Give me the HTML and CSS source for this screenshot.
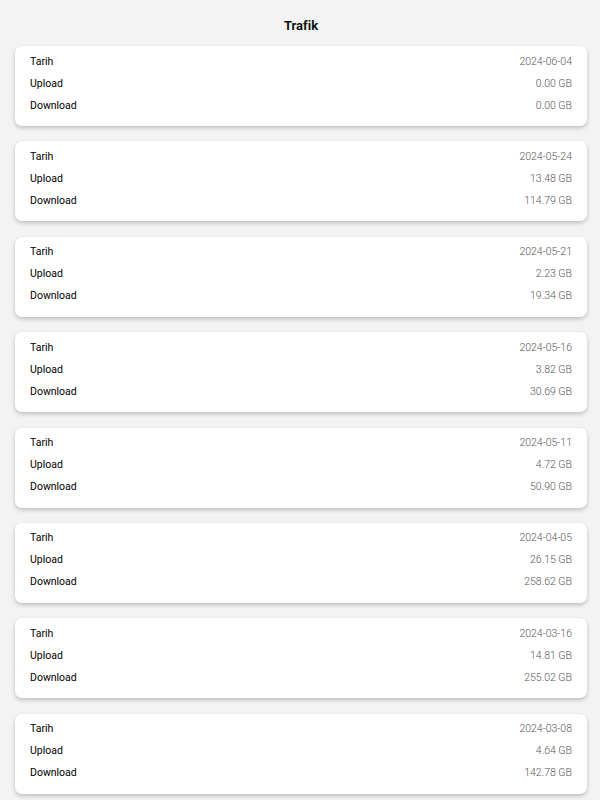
FILE: index.html
```html
<!DOCTYPE html>
<html lang="tr">
<head>
<meta charset="utf-8" />
<title>Trafik</title>
<link rel="stylesheet" href="styles.css">
</head>
<body>
<div class="page">
  <h1 class="title">Trafik</h1>
  <div class="list">
    <div class="card">
      <div class="row"><span class="label">Tarih</span><span class="value">2024-06-04</span></div>
      <div class="row"><span class="label">Upload</span><span class="value">0.00 GB</span></div>
      <div class="row"><span class="label">Download</span><span class="value">0.00 GB</span></div>
    </div>
    <div class="card">
      <div class="row"><span class="label">Tarih</span><span class="value">2024-05-24</span></div>
      <div class="row"><span class="label">Upload</span><span class="value">13.48 GB</span></div>
      <div class="row"><span class="label">Download</span><span class="value">114.79 GB</span></div>
    </div>
    <div class="card">
      <div class="row"><span class="label">Tarih</span><span class="value">2024-05-21</span></div>
      <div class="row"><span class="label">Upload</span><span class="value">2.23 GB</span></div>
      <div class="row"><span class="label">Download</span><span class="value">19.34 GB</span></div>
    </div>
    <div class="card">
      <div class="row"><span class="label">Tarih</span><span class="value">2024-05-16</span></div>
      <div class="row"><span class="label">Upload</span><span class="value">3.82 GB</span></div>
      <div class="row"><span class="label">Download</span><span class="value">30.69 GB</span></div>
    </div>
    <div class="card">
      <div class="row"><span class="label">Tarih</span><span class="value">2024-05-11</span></div>
      <div class="row"><span class="label">Upload</span><span class="value">4.72 GB</span></div>
      <div class="row"><span class="label">Download</span><span class="value">50.90 GB</span></div>
    </div>
    <div class="card">
      <div class="row"><span class="label">Tarih</span><span class="value">2024-04-05</span></div>
      <div class="row"><span class="label">Upload</span><span class="value">26.15 GB</span></div>
      <div class="row"><span class="label">Download</span><span class="value">258.62 GB</span></div>
    </div>
    <div class="card">
      <div class="row"><span class="label">Tarih</span><span class="value">2024-03-16</span></div>
      <div class="row"><span class="label">Upload</span><span class="value">14.81 GB</span></div>
      <div class="row"><span class="label">Download</span><span class="value">255.02 GB</span></div>
    </div>
    <div class="card">
      <div class="row"><span class="label">Tarih</span><span class="value">2024-03-08</span></div>
      <div class="row"><span class="label">Upload</span><span class="value">4.64 GB</span></div>
      <div class="row"><span class="label">Download</span><span class="value">142.78 GB</span></div>
    </div>
  </div>
</div>
</body>
</html>
```

FILE: styles.css
```css
/* reset */
body, h1, div { margin: 0; padding: 0; }
body { background: #f3f3f3; font-family: Roboto, "Noto Sans", sans-serif; color: #111; }

.page { padding: 0 13px 20px 15px; }
.title { font-size: 13px; font-weight: 700; text-align: center; height: 46px; line-height: 51px; color: #111; }

.list { display: flex; flex-direction: column; gap: 15.4px; }
.card { background: #fff; border-radius: 7px; padding: 4px 15px 10px; box-shadow: 0 2px 4px rgba(0,0,0,0.22); }
.row { display: flex; justify-content: space-between; align-items: center; height: 22px; font-size: 10.5px; }
.label { font-weight: 400; color: #000; }
.value { font-weight: 300; color: #555; }
```
